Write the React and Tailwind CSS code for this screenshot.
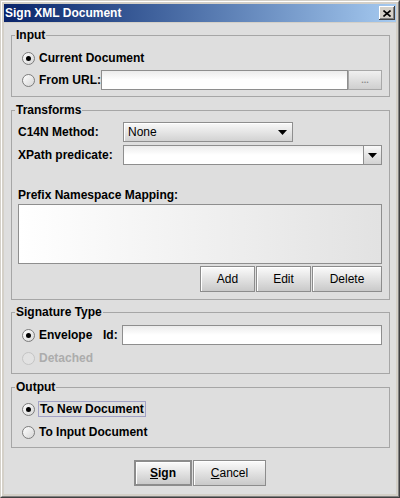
import React from "react";

function Radio({ checked, disabled }) {
  return (
    <span
      className={`inline-flex h-[13px] w-[13px] shrink-0 items-center justify-center rounded-full border ${
        disabled ? "border-[#c4c4c4] bg-[#e2e2e2]" : "border-[#7c7c7c] bg-gradient-to-br from-white to-[#d6d6d6]"
      }`}
    >
      {checked && <span className="h-[5px] w-[5px] rounded-full bg-black" />}
    </span>
  );
}

function Arrow() {
  return (
    <svg width="9" height="5" viewBox="0 0 9 5">
      <path d="M0 0h9L4.5 5z" fill="#000" />
    </svg>
  );
}

function Btn({ children, className = "" }) {
  return (
    <button
      className={`flex h-[26px] items-center justify-center border border-[#8c8c8c] bg-gradient-to-b from-[#fbfbfb] to-[#c9c9c9] shadow-[inset_1px_1px_0_#fff] ${className}`}
    >
      {children}
    </button>
  );
}

function Field({ className = "" }) {
  return <div className={`h-[20px] border border-[#8e8e8e] bg-gradient-to-b from-[#ececec] via-white to-white ${className}`} />;
}

export default function App() {
  return (
    <div className="h-[498px] w-[400px] border border-t-[#d4d0c8] border-l-[#d4d0c8] border-r-[#404040] border-b-[#404040] font-['Liberation_Sans',Arial,sans-serif] text-[12px] text-black">
      <div className="flex h-full flex-col border border-t-white border-l-white border-r-[#808080] border-b-[#808080] bg-[#d4d0c8] p-[2px]">
        {/* title bar */}
        <div className="flex h-[18px] items-center justify-between bg-gradient-to-r from-[#0a246a] to-[#a6caf0] pl-[1px] pr-[1px]">
          <span className="font-bold text-white">Sign XML Document</span>
          <span className="flex h-[14px] w-[16px] items-center justify-center bg-[#d4d0c8] shadow-[inset_-1px_-1px_0_#404040,inset_1px_1px_0_#fff,inset_-2px_-2px_0_#808080]">
            <svg width="8" height="7" viewBox="0 0 8 7">
              <path d="M0.5 0.5L7.5 6.5M7.5 0.5L0.5 6.5" stroke="#000" strokeWidth="1.6" />
            </svg>
          </span>
        </div>

        <div className="mt-[1px] flex-1 bg-[#dedede] pl-[7px] pt-[5px] font-bold">
          {/* Input */}
          <fieldset className="w-[379px] border border-[#a6a6a6] pb-[6px] pl-[10px] pr-[7px] pt-[7px]">
            <legend className="ml-[-7px] px-[1px] leading-[14px]">Input</legend>
            <div className="flex h-[18px] items-center gap-[4px]">
              <Radio checked />
              <span>Current Document</span>
            </div>
            <div className="mt-[3px] flex h-[20px] items-center">
              <Radio />
              <span className="ml-[4px] w-[62px]">From URL:</span>
              <Field className="flex-1" />
              <div className="flex h-[20px] w-[34px] items-center justify-center border border-[#a8a8a8] bg-gradient-to-b from-[#f0f0f0] to-[#cfcfcf] text-[9px] leading-none text-[#8a8a8a]">
                ...
              </div>
            </div>
          </fieldset>

          {/* Transforms */}
          <fieldset className="mt-[6px] w-[379px] border border-[#a6a6a6] pb-[7px] pl-[6px] pr-[7px] pt-[5px]">
            <legend className="ml-[-3px] px-[1px] leading-[14px]">Transforms</legend>
            <div className="flex h-[20px] items-center">
              <span className="w-[105px]">C14N Method:</span>
              <div className="flex h-[20px] w-[170px] items-center justify-between border border-[#8e8e8e] bg-gradient-to-b from-[#f9f9f9] to-[#d2d2d2] pl-[4px] pr-[5px] font-normal shadow-[inset_1px_1px_0_#fff]">
                <span>None</span>
                <Arrow />
              </div>
            </div>
            <div className="mt-[3px] flex h-[20px] items-center">
              <span className="w-[105px]">XPath predicate:</span>
              <Field className="flex-1" />
              <div className="flex h-[20px] w-[18px] items-center justify-center border border-l-0 border-[#8e8e8e] bg-gradient-to-b from-[#f9f9f9] to-[#d2d2d2]">
                <Arrow />
              </div>
            </div>
            <div className="mt-[23px] h-[14px] leading-[14px]">Prefix Namespace Mapping:</div>
            <div className="mt-[2px] h-[60px] border border-[#8e8e8e] bg-gradient-to-r from-white to-[#e2e2e2]" />
            <div className="mt-[2px] flex justify-end gap-[1px] font-normal">
              <Btn className="w-[55px]">Add</Btn>
              <Btn className="w-[55px]">Edit</Btn>
              <Btn className="w-[70px]">Delete</Btn>
            </div>
          </fieldset>

          {/* Signature Type */}
          <fieldset className="mt-[5px] w-[379px] border border-[#a6a6a6] pb-[6px] pl-[10px] pr-[7px] pt-[6px]">
            <legend className="ml-[-7px] px-[1px] leading-[14px]">Signature Type</legend>
            <div className="flex h-[20px] items-center">
              <Radio checked />
              <span className="ml-[4px] w-[64px]">Envelope</span>
              <span className="w-[19px]">Id:</span>
              <Field className="flex-1" />
            </div>
            <div className="mt-[4px] flex h-[18px] items-center gap-[4px] text-[#acacac]">
              <Radio disabled />
              <span>Detached</span>
            </div>
          </fieldset>

          {/* Output */}
          <fieldset className="mt-[6px] w-[379px] border border-[#a6a6a6] pb-[6px] pl-[10px] pr-[7px] pt-[6px]">
            <legend className="ml-[-7px] px-[1px] leading-[14px]">Output</legend>
            <div className="flex h-[18px] items-center gap-[3px]">
              <Radio checked />
              <span className="border border-[#a2a2c6] px-[1px] leading-[14px]">To New Document</span>
            </div>
            <div className="mt-[5px] flex h-[18px] items-center gap-[4px]">
              <Radio />
              <span>To Input Document</span>
            </div>
          </fieldset>

          <div className="mt-[12px] flex justify-center pr-[7px]">
            <Btn className="w-[58px] border-2 border-[#6e6e6e]">
              <span>
                <u>S</u>ign
              </span>
            </Btn>
            <Btn className="ml-[1px] w-[73px] font-normal">
              <span>
                <u>C</u>ancel
              </span>
            </Btn>
          </div>
        </div>
      </div>
    </div>
  );
}
